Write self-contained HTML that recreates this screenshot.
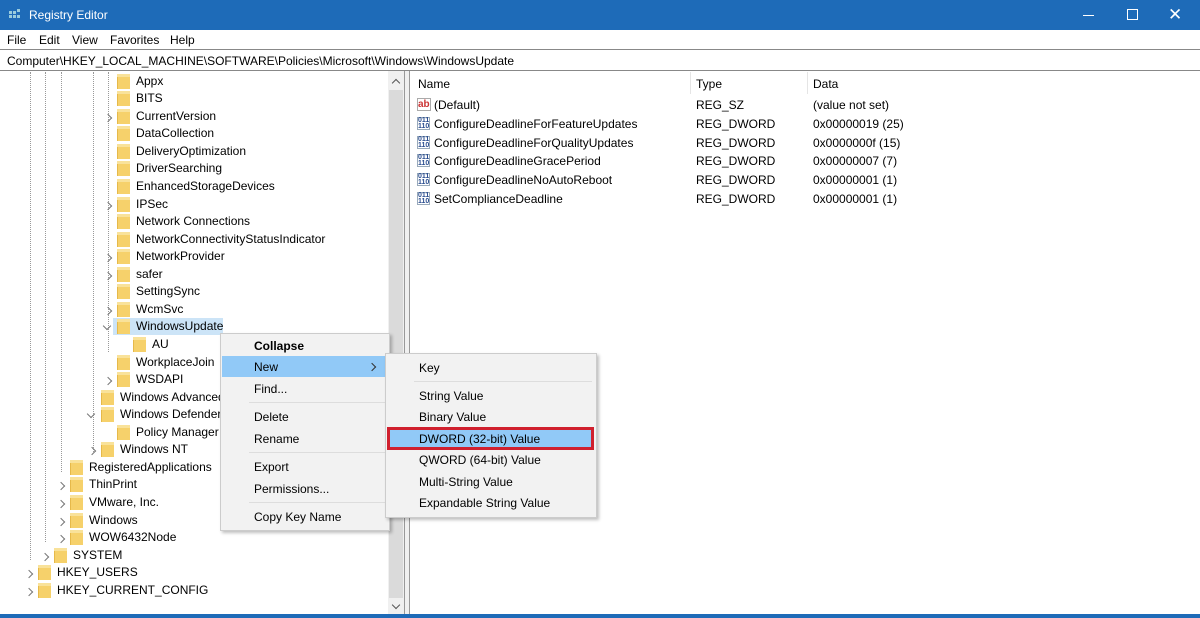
<!DOCTYPE html>
<html><head><style>
*{margin:0;padding:0;box-sizing:border-box}
body{width:1200px;height:618px;overflow:hidden;background:#fff;font-family:"Liberation Sans",sans-serif;font-size:12px;color:#000;position:relative}
.a{position:absolute;white-space:nowrap}
.f{position:absolute;width:13px;height:15px;background:#f6d16b;border-left:1px solid #e6b94a}
.f:before{content:"";position:absolute;left:-1px;top:0;width:13px;height:3px;background:#f9e29a}
.ch{position:absolute;width:6px;height:6px;border-right:1px solid #777;border-bottom:1px solid #777;transform:rotate(-45deg);margin-top:6px;margin-left:1px;font-size:0;color:transparent}
.cd{position:absolute;width:6px;height:6px;border-right:1px solid #777;border-bottom:1px solid #777;transform:rotate(45deg);margin-top:4px;margin-left:2px;font-size:0;color:transparent}
.dv{position:absolute;width:0;border-left:1px dotted #999}
.mi{position:absolute;left:33px;font-size:12px}
.sep{position:absolute;height:1px;background:#ddd}
.ic{position:absolute;left:417px;width:13px;height:13px;font-size:7px;line-height:6px;color:#2a4d8f;font-weight:bold;border:1px solid #9ab}
</style></head><body>
<div class="a" style="left:0;top:0;width:1200px;height:30px;background:#1e6bb8"></div>
<div class="a" style="left:9px;top:9px;width:12px;height:12px;">
<div class="a" style="left:0;top:2px;width:3px;height:3px;background:#9cd"></div><div class="a" style="left:4px;top:2px;width:3px;height:3px;background:#9cd"></div>
<div class="a" style="left:0;top:6px;width:3px;height:3px;background:#9cd"></div><div class="a" style="left:4px;top:6px;width:3px;height:3px;background:#9cd"></div><div class="a" style="left:8px;top:6px;width:3px;height:3px;background:#9cd"></div>
<div class="a" style="left:8px;top:0px;width:3px;height:3px;background:#9cd"></div>
</div>
<div class="a" style="left:29px;top:8px;color:#fff;font-size:12px">Registry Editor</div>
<div class="a" style="left:1083px;top:15px;width:11px;height:1px;background:#fff"></div>
<div class="a" style="left:1127px;top:9px;width:11px;height:11px;border:1px solid #fff"></div>
<div class="a" style="left:1168px;top:5px;color:#fff;font-size:17px">✕</div>
<div class="a" style="left:0;top:30px;width:1200px;height:20px;background:#fff"></div>
<div class="a" style="left:7px;top:33px">File</div><div class="a" style="left:39px;top:33px">Edit</div><div class="a" style="left:72px;top:33px">View</div><div class="a" style="left:110px;top:33px">Favorites</div><div class="a" style="left:170px;top:33px">Help</div>
<div class="a" style="left:0;top:49px;width:1200px;height:22px;border-top:1px solid #888;border-bottom:1px solid #888"></div>
<div class="a" style="left:7px;top:54px">Computer\HKEY_LOCAL_MACHINE\SOFTWARE\Policies\Microsoft\Windows\WindowsUpdate</div>
<div class="dv" style="left:30px;top:72px;height:488px"></div>
<div class="dv" style="left:45px;top:72px;height:470px"></div>
<div class="dv" style="left:61px;top:72px;height:400px"></div>
<div class="dv" style="left:93px;top:72px;height:380px"></div>
<div class="dv" style="left:108px;top:72px;height:280px"></div>
<div class="a" style="left:113px;top:318px;width:110px;height:17px;background:#cce4f7"></div>
<div class="f" style="left:117px;top:74px"></div><div class="a" style="left:136px;top:74px">Appx</div>
<div class="f" style="left:117px;top:91px"></div><div class="a" style="left:136px;top:91px">BITS</div>
<div class="ch" style="left:104px;top:109px"></div><div class="f" style="left:117px;top:109px"></div><div class="a" style="left:136px;top:109px">CurrentVersion</div>
<div class="f" style="left:117px;top:126px"></div><div class="a" style="left:136px;top:126px">DataCollection</div>
<div class="f" style="left:117px;top:144px"></div><div class="a" style="left:136px;top:144px">DeliveryOptimization</div>
<div class="f" style="left:117px;top:161px"></div><div class="a" style="left:136px;top:161px">DriverSearching</div>
<div class="f" style="left:117px;top:179px"></div><div class="a" style="left:136px;top:179px">EnhancedStorageDevices</div>
<div class="ch" style="left:104px;top:197px"></div><div class="f" style="left:117px;top:197px"></div><div class="a" style="left:136px;top:197px">IPSec</div>
<div class="f" style="left:117px;top:214px"></div><div class="a" style="left:136px;top:214px">Network Connections</div>
<div class="f" style="left:117px;top:232px"></div><div class="a" style="left:136px;top:232px">NetworkConnectivityStatusIndicator</div>
<div class="ch" style="left:104px;top:249px"></div><div class="f" style="left:117px;top:249px"></div><div class="a" style="left:136px;top:249px">NetworkProvider</div>
<div class="ch" style="left:104px;top:267px"></div><div class="f" style="left:117px;top:267px"></div><div class="a" style="left:136px;top:267px">safer</div>
<div class="f" style="left:117px;top:284px"></div><div class="a" style="left:136px;top:284px">SettingSync</div>
<div class="ch" style="left:104px;top:302px"></div><div class="f" style="left:117px;top:302px"></div><div class="a" style="left:136px;top:302px">WcmSvc</div>
<div class="cd" style="left:102px;top:319px"></div><div class="f" style="left:117px;top:319px"></div><div class="a" style="left:136px;top:319px">WindowsUpdate</div>
<div class="f" style="left:133px;top:337px"></div><div class="a" style="left:152px;top:337px">AU</div>
<div class="f" style="left:117px;top:355px"></div><div class="a" style="left:136px;top:355px">WorkplaceJoin</div>
<div class="ch" style="left:104px;top:372px"></div><div class="f" style="left:117px;top:372px"></div><div class="a" style="left:136px;top:372px">WSDAPI</div>
<div class="f" style="left:101px;top:390px"></div><div class="a" style="left:120px;top:390px">Windows Advanced</div>
<div class="cd" style="left:86px;top:407px"></div><div class="f" style="left:101px;top:407px"></div><div class="a" style="left:120px;top:407px">Windows Defender</div>
<div class="f" style="left:117px;top:425px"></div><div class="a" style="left:136px;top:425px">Policy Manager</div>
<div class="ch" style="left:88px;top:442px"></div><div class="f" style="left:101px;top:442px"></div><div class="a" style="left:120px;top:442px">Windows NT</div>
<div class="f" style="left:70px;top:460px"></div><div class="a" style="left:89px;top:460px">RegisteredApplications</div>
<div class="ch" style="left:57px;top:477px"></div><div class="f" style="left:70px;top:477px"></div><div class="a" style="left:89px;top:477px">ThinPrint</div>
<div class="ch" style="left:57px;top:495px"></div><div class="f" style="left:70px;top:495px"></div><div class="a" style="left:89px;top:495px">VMware, Inc.</div>
<div class="ch" style="left:57px;top:513px"></div><div class="f" style="left:70px;top:513px"></div><div class="a" style="left:89px;top:513px">Windows</div>
<div class="ch" style="left:57px;top:530px"></div><div class="f" style="left:70px;top:530px"></div><div class="a" style="left:89px;top:530px">WOW6432Node</div>
<div class="ch" style="left:41px;top:548px"></div><div class="f" style="left:54px;top:548px"></div><div class="a" style="left:73px;top:548px">SYSTEM</div>
<div class="ch" style="left:25px;top:565px"></div><div class="f" style="left:38px;top:565px"></div><div class="a" style="left:57px;top:565px">HKEY_USERS</div>
<div class="ch" style="left:25px;top:583px"></div><div class="f" style="left:38px;top:583px"></div><div class="a" style="left:57px;top:583px">HKEY_CURRENT_CONFIG</div>
<div class="a" style="left:388px;top:71px;width:16px;height:545px;background:#f0f0f0"></div>
<div class="a" style="left:389px;top:90px;width:14px;height:508px;background:#dadada"></div>
<div class="a" style="left:393px;top:80px;width:6px;height:6px;border-left:1px solid #555;border-top:1px solid #555;transform:rotate(45deg)"></div>
<div class="a" style="left:393px;top:602px;width:6px;height:6px;border-right:1px solid #555;border-bottom:1px solid #555;transform:rotate(45deg)"></div>
<div class="a" style="left:404px;top:71px;width:6px;height:545px;background:#f0f0f0;border-left:1px solid #999;border-right:1px solid #999"></div>
<div class="a" style="left:0;top:614px;width:1200px;height:4px;background:#1e6bb8"></div>
<div class="a" style="left:418px;top:77px">Name</div><div class="a" style="left:696px;top:77px">Type</div><div class="a" style="left:813px;top:77px">Data</div>
<div class="a" style="left:690px;top:72px;width:1px;height:22px;background:#e5e5e5"></div>
<div class="a" style="left:807px;top:72px;width:1px;height:22px;background:#e5e5e5"></div>
<div class="a" style="left:417px;top:98px;font-size:10px;color:#c33;font-weight:bold;border:1px solid #aaa;height:13px;line-height:11px">ab</div>
<div class="a" style="left:434px;top:98px">(Default)</div><div class="a" style="left:696px;top:98px">REG_SZ</div><div class="a" style="left:813px;top:98px">(value not set)</div>
<div class="ic" style="top:117px">011<br>110</div><div class="a" style="left:434px;top:117px">ConfigureDeadlineForFeatureUpdates</div><div class="a" style="left:696px;top:117px">REG_DWORD</div><div class="a" style="left:813px;top:117px">0x00000019 (25)</div>
<div class="ic" style="top:136px">011<br>110</div><div class="a" style="left:434px;top:136px">ConfigureDeadlineForQualityUpdates</div><div class="a" style="left:696px;top:136px">REG_DWORD</div><div class="a" style="left:813px;top:136px">0x0000000f (15)</div>
<div class="ic" style="top:154px">011<br>110</div><div class="a" style="left:434px;top:154px">ConfigureDeadlineGracePeriod</div><div class="a" style="left:696px;top:154px">REG_DWORD</div><div class="a" style="left:813px;top:154px">0x00000007 (7)</div>
<div class="ic" style="top:173px">011<br>110</div><div class="a" style="left:434px;top:173px">ConfigureDeadlineNoAutoReboot</div><div class="a" style="left:696px;top:173px">REG_DWORD</div><div class="a" style="left:813px;top:173px">0x00000001 (1)</div>
<div class="ic" style="top:192px">011<br>110</div><div class="a" style="left:434px;top:192px">SetComplianceDeadline</div><div class="a" style="left:696px;top:192px">REG_DWORD</div><div class="a" style="left:813px;top:192px">0x00000001 (1)</div>
<div class="a" style="left:220px;top:333px;width:170px;height:198px;background:#f2f2f2;border:1px solid #ccc;box-shadow:2px 2px 3px rgba(0,0,0,.25)">
<div class="a" style="left:1px;top:22px;width:164px;height:21px;background:#91c9f7"></div>
<div class="mi" style="top:5px;font-weight:bold">Collapse</div>
<div class="mi" style="top:26px">New</div><div class="a" style="left:148px;top:30px;width:6px;height:6px;border-right:1px solid #333;border-bottom:1px solid #333;transform:rotate(-45deg)"></div>
<div class="mi" style="top:48px">Find...</div>
<div class="sep" style="left:28px;top:68px;width:138px"></div>
<div class="mi" style="top:76px">Delete</div>
<div class="mi" style="top:98px">Rename</div>
<div class="sep" style="left:28px;top:118px;width:138px"></div>
<div class="mi" style="top:126px">Export</div>
<div class="mi" style="top:148px">Permissions...</div>
<div class="sep" style="left:28px;top:168px;width:138px"></div>
<div class="mi" style="top:176px">Copy Key Name</div>
</div>
<div class="a" style="left:385px;top:353px;width:212px;height:165px;background:#f2f2f2;border:1px solid #ccc;box-shadow:2px 2px 3px rgba(0,0,0,.25)">
<div class="a" style="left:1px;top:73px;width:207px;height:23px;background:#91c9f7;border:3px solid #d0202e"></div>
<div class="mi" style="top:7px">Key</div>
<div class="sep" style="left:28px;top:27px;width:178px"></div>
<div class="mi" style="top:35px">String Value</div>
<div class="mi" style="top:56px">Binary Value</div>
<div class="mi" style="top:78px">DWORD (32-bit) Value</div>
<div class="mi" style="top:99px">QWORD (64-bit) Value</div>
<div class="mi" style="top:121px">Multi-String Value</div>
<div class="mi" style="top:142px">Expandable String Value</div>
</div>
</body></html>
